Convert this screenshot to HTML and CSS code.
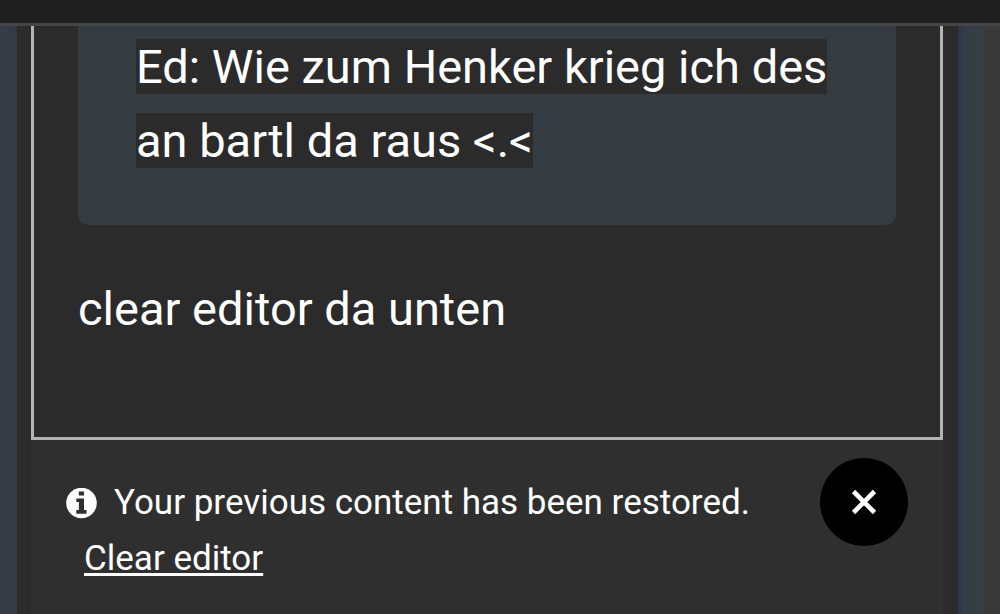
FILE: index.html
```html
<!DOCTYPE html>
<html lang="de">
<head>
    <meta charset="UTF-8">
    <meta name="viewport" content="width=device-width, initial-scale=1.0">
    <title>Editor</title>
    <link rel="stylesheet" href="styles.css">
</head>
<body>
    <header class="topbar"></header>
    <div class="page">
        <main class="panel">
            <div class="editor">
                <blockquote class="quote">
                    <span class="mark">Ed: Wie zum Henker krieg ich des an bartl da raus &lt;.&lt;</span>
                </blockquote>
                <p class="text">clear editor da unten</p>
            </div>
            <div class="notice">
                <div class="notice-text">
                    <div class="notice-row">
                        <svg class="icon-info" viewBox="0 0 31 31" aria-hidden="true">
                            <circle cx="15.5" cy="15" r="15.3" fill="#fff"/>
                            <path d="M12.8 3.5h5.2v4h-5.2zM10.3 10.5h7.7v11.6h2.5v3.6H10.3v-3.6h2.6v-8h-2.6z" fill="#2f2f2f"/>
                        </svg>
                        <span>Your previous content has been restored.</span>
                    </div>
                    <a href="#" class="clear">Clear editor</a>
                </div>
                <button type="button" class="close" aria-label="Close">
                    <svg class="icon-close" viewBox="0 0 26 26" aria-hidden="true">
                        <path d="M2.5 2.5l21 21M23.5 2.5l-21 21" stroke="#fff" stroke-width="4.6"/>
                    </svg>
                </button>
            </div>
        </main>
    </div>
</body>
</html>
```
FILE: styles.css
```css
* {
    box-sizing: border-box;
}

body {
    display: flex;
    flex-direction: column;
    min-height: 100vh;
    margin: 0;
    background-color: #393939;
    color: #fff;
    font-family: Roboto, sans-serif;
}

.topbar {
    height: 26px;
    background-color: #1f1f1f;
    border-bottom: 3px solid #434644;
}

.page {
    display: flex;
    flex: 1;
    margin-right: 16px;
    padding: 0 26px 0 17px;
    background: linear-gradient(to right, #343d45, #343c47 14px, #2d384b 17px, #2d384b calc(100% - 24px), #333c48 calc(100% - 21px), #363e42);
}

.panel {
    flex: 1;
    padding: 0 15px 0 14px;
    background-color: #2b2b2b;
}

/* editor content */
.editor {
    padding: 0 44px 91px;
    border: 3px solid #b3b3b3;
    border-top: none;
    font-size: 47px;
    line-height: 74px;
}

.quote {
    margin: 0 0 47px;
    padding: 4px 58px 47px;
    background-color: #353c41;
    border-radius: 0 0 10px 10px;
}

.mark {
    background-color: #2b2b2b;
}

.text {
    margin: 0;
}

/* restored notice */
.notice {
    display: flex;
    align-items: flex-start;
    justify-content: space-between;
    padding: 18px 35px 27px;
    background-color: #2f2f2f;
    font-size: 35px;
    line-height: 56px;
}

.notice-text {
    padding-top: 17px;
}

.notice-row {
    display: flex;
    align-items: center;
    gap: 17px;
}

.icon-info {
    width: 31px;
    height: 31px;
}

.clear {
    margin-left: 18px;
    color: #fff;
    text-decoration-thickness: 3px;
    text-underline-offset: 3px;
}

.close {
    display: flex;
    align-items: center;
    justify-content: center;
    width: 88px;
    height: 88px;
    padding: 0;
    background-color: #000;
    border: none;
    border-radius: 50%;
    cursor: pointer;
}

.icon-close {
    width: 26px;
    height: 26px;
}
```
